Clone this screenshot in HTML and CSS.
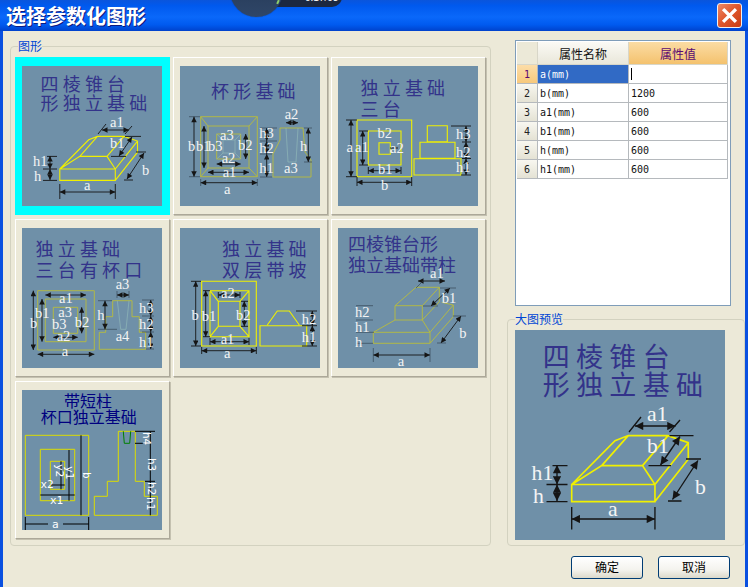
FILE: index.html
```html
<!DOCTYPE html>
<html lang="zh-CN">
<head>
<meta charset="utf-8">
<title>选择参数化图形</title>
<link rel="stylesheet" href="styles.css">
</head>
<body>
<div class="window">
  <header class="titlebar">
    <h1 class="title">选择参数化图形</h1>
    <div class="floater"><span class="floater-dial"></span><span class="floater-tick"></span><span class="floater-time">0:17/03</span></div>
    <button class="close" aria-label="关闭"><svg viewBox="0 0 24 24" class="close-x"><path d="M6.5 6.5L17.5 17.5M17.5 6.5L6.5 17.5"/></svg></button>
  </header>
  <main class="client">
    <div class="columns">
      <fieldset class="group group-shapes">
        <legend>图形</legend>
        <div class="shape-grid">
          <div class="cell cell-selected">
            <svg class="thumb" viewBox="0 0 140 140">
              <defs>
                <marker id="ah" viewBox="0 0 6 6" refX="6" refY="3" markerUnits="userSpaceOnUse" markerWidth="7" markerHeight="5.5" orient="auto-start-reverse"><path d="M0 0L6 3L0 6z" fill="#151515"/></marker>
              </defs>
              <g id="d1">
                <text class="ttl" x="18.5" y="24.5">四棱锥台</text>
                <text class="ttl" x="18.5" y="43.5">形独立基础</text>
                <path class="yb" d="M37.8 103H93.3V114.4H37.8zM37.8 103L66.7 73.8L75.5 70.4H102L115.5 75.1V86.2L93.3 114.4M93.3 103L115.5 75.1M37.8 103L57.8 90.4H85L93.3 103M57.8 90.4L75.5 70.4M85 90.4L102 70.4"/>
                <line class="dim" x1="37.8" y1="126" x2="93.3" y2="126"/>
                <line class="dim" x1="80" y1="64" x2="107" y2="64"/>
                <line class="dim" x1="110" y1="71" x2="97" y2="90"/>
                <line class="dim" x1="122" y1="87" x2="105" y2="113"/>
                <line class="dim" x1="28" y1="90" x2="28" y2="103"/>
                <line class="dim" x1="28" y1="103" x2="28" y2="114"/>
                <path class="tick" d="M37.8 118V133M93.3 118V133M76 68L84 58M103 68L110 60M103 70.4H119M89 90.4H104M102 114H111M114 86H124M25 90.4H35M21 103H35M21 114.4H35"/>
                <text class="lbl" x="62" y="124">a</text>
                <text class="lbl" x="88" y="60.5">a1</text>
                <text class="lbl" x="88" y="82">b1</text>
                <text class="lbl" x="120" y="109">b</text>
                <text class="lbl" x="11" y="100">h1</text>
                <text class="lbl" x="12" y="115">h</text>
              </g>
            </svg>
          </div>
          <div class="cell">
            <svg class="thumb" viewBox="0 0 140 140">
              <text class="ttl" x="31" y="32">杯形基础</text>
              <path class="yt" d="M20.7 50.7H77.3V110.7H20.7zM28 60H69V102H28zM36.7 68H60.7V93H36.7zM20.7 50.7L28 60M77.3 50.7L69 60M20.7 110.7L28 102M77.3 110.7L69 102M100 62H123L125 86L131 94V111H93V88L100 74z"/>
              <path class="pale" d="M43 74H55V87H43zM36.7 68L43 74M60.7 68L55 74M36.7 93L43 87M60.7 93L55 87M106 62L108 96H116L118 62"/>
              <line class="dim" x1="20.7" y1="116.7" x2="77.3" y2="116.7"/>
              <line class="dim" x1="28" y1="106.3" x2="69" y2="106.3"/>
              <line class="dim" x1="36.7" y1="98" x2="60.7" y2="98"/>
              <line class="dim" x1="14" y1="50.7" x2="14" y2="110.7"/>
              <line class="dim" x1="24" y1="60" x2="24" y2="102"/>
              <line class="dim" x1="65.7" y1="68" x2="65.7" y2="93"/>
              <line class="dim" x1="106" y1="56.7" x2="118" y2="56.7"/>
              <line class="dim" x1="86.7" y1="62" x2="86.7" y2="75"/>
              <line class="dim" x1="86.7" y1="75" x2="86.7" y2="88"/>
              <line class="dim" x1="86.7" y1="88" x2="86.7" y2="111"/>
              <line class="dim" x1="128.3" y1="62" x2="128.3" y2="96"/>
              <path class="tick thin" d="M9 50.7H20M9 110.7H20M20.7 113V120M77.3 113V120M80 62H97M80 75H97M80 88H92M80 111H92M124 62H132M124 96H132"/>
              <g class="lbl-sm">
                <text x="8" y="85">b</text><text x="16" y="85">b1</text><text x="28" y="85">b3</text>
                <text x="40" y="74">a3</text><text x="58" y="84">b2</text><text x="41.7" y="97">a2</text><text x="42.7" y="111">a1</text>
                <text x="44" y="128">a</text><text x="104.7" y="53.3">a2</text><text x="79.3" y="72.3">h3</text><text x="79.3" y="86.7">h2</text>
                <text x="79.3" y="106.7">h1</text><text x="120" y="84.7">h</text><text x="104" y="107.3">a3</text>
              </g>
            </svg>
          </div>
          <div class="cell">
            <svg class="thumb" viewBox="0 0 140 140">
              <text class="ttl" x="22.5" y="29">独立基础</text>
              <text class="ttl" x="22.5" y="50">三台</text>
              <path class="yb" d="M19 54H73.7V110.7H19zM30.3 65H63V99H30.3zM41 76.7H52.3V88.3H41zM89.3 59.7H109.3V75.7H89.3zM82 76.3H117V92.3H82zM76 92.7H123V109H76z"/>
              <line class="dim" x1="13" y1="54" x2="13" y2="110.7"/>
              <line class="dim" x1="24.7" y1="65" x2="24.7" y2="99"/>
              <line class="dim" x1="19" y1="116.3" x2="73.7" y2="116.3"/>
              <line class="dim" x1="30.3" y1="104.7" x2="63" y2="104.7"/>
              <line class="dim" x1="128" y1="60" x2="128" y2="76"/>
              <line class="dim" x1="128" y1="76" x2="128" y2="92.5"/>
              <line class="dim" x1="128" y1="92.5" x2="128" y2="109"/>
              <path class="tick" d="M8 54H19M8 110.7H19M21 65H30M21 99H30M19 111V120M73.7 111V120M30.3 101V108M63 101V108M113 60H133M124 76H133M124 92.5H133M123 109H133M52 82H60"/>
              <text class="lbl" x="8.5" y="86">a</text><text class="lbl" x="17" y="86">a1</text>
              <text class="lbl" x="39.5" y="72">b2</text><text class="lbl" x="52" y="87">a2</text>
              <text class="lbl" x="40" y="108">b1</text><text class="lbl" x="43" y="124">b</text>
              <text class="lbl" x="118" y="73">h3</text><text class="lbl" x="118" y="90.5">h2</text><text class="lbl" x="118" y="106">h1</text>
            </svg>
          </div>
          <div class="cell">
            <svg class="thumb" viewBox="0 0 140 140">
              <text class="ttl" x="13.5" y="27.7">独立基础</text>
              <text class="ttl" x="13.5" y="48.7">三台有杯口</text>
              <path class="yt" d="M15.7 62.7H72.3V122H15.7zM23.3 71H64V113.7H23.3zM31.3 79.3H55.7V105.3H31.3zM90.7 72.7H110V88.7H117.3V104.3H123.7V121.3H77.3V104.3H83.7V88.7H90.7z"/>
              <path class="pale" d="M95.3 72.7L98.7 101.3H104L107 72.7"/>
              <line class="dim" x1="11.3" y1="62.7" x2="11.3" y2="122"/>
              <line class="dim" x1="20" y1="71" x2="20" y2="113.7"/>
              <line class="dim" x1="23.3" y1="67" x2="64" y2="67"/>
              <line class="dim" x1="15.7" y1="126.3" x2="72.3" y2="126.3"/>
              <line class="dim" x1="59.7" y1="79.3" x2="59.7" y2="105.3"/>
              <line class="dim" x1="31.3" y1="109.3" x2="55.7" y2="109.3"/>
              <line class="dim" x1="95" y1="67" x2="107" y2="67"/>
              <line class="dim" x1="83" y1="72.7" x2="83" y2="101.3"/>
              <line class="dim" x1="128.7" y1="72" x2="128.7" y2="88"/>
              <line class="dim" x1="128.7" y1="88" x2="128.7" y2="104"/>
              <line class="dim" x1="128.7" y1="104" x2="128.7" y2="121"/>
              <path class="tick thin" d="M76 72.7H90M76 101.3H95M120 72H132M120 88H132M120 104H132M124 121H132M95 63V70M107 63V70"/>
              <g class="lbl-sm">
                <text x="37" y="75">a1</text><text x="13" y="90">b1</text><text x="8" y="100">b</text><text x="36.3" y="88.7">a3</text>
                <text x="30" y="101">b3</text><text x="52.7" y="98.7">b2</text><text x="34.7" y="112.7">a2</text><text x="39.7" y="127.7">a</text>
                <text x="93.7" y="61">a3</text><text x="75.3" y="92">h</text><text x="93.7" y="113">a4</text>
                <text x="117" y="85">h3</text><text x="117" y="101">h2</text><text x="117" y="118.7">h1</text>
              </g>
            </svg>
          </div>
          <div class="cell">
            <svg class="thumb" viewBox="0 0 140 140">
              <text class="ttl" x="42" y="27.7">独立基础</text>
              <text class="ttl" x="42" y="48.7">双层带坡</text>
              <path class="yb" d="M21.7 53.3H76.3V118H21.7zM80 97.7H126.7V118H80zM87.3 97L97.3 83H109.3L119.3 97M30 62.7H69V108.7H30zM38.3 73.3H60V98.3H38.3zM30 62.7L38.3 73.3M69 62.7L60 73.3M30 108.7L38.3 98.3M69 108.7L60 98.3"/>
              <line class="dim" x1="15.7" y1="53.3" x2="15.7" y2="118"/>
              <line class="dim" x1="25.7" y1="62.7" x2="25.7" y2="108.7"/>
              <line class="dim" x1="64.3" y1="73.3" x2="64.3" y2="98.3"/>
              <line class="dim" x1="38.3" y1="67" x2="60" y2="67"/>
              <line class="dim" x1="30" y1="113.7" x2="69" y2="113.7"/>
              <line class="dim" x1="21.7" y1="122.7" x2="76.3" y2="122.7"/>
              <line class="dim" x1="132.3" y1="83" x2="132.3" y2="97.7"/>
              <line class="dim" x1="132.3" y1="97.7" x2="132.3" y2="118"/>
              <path class="tick" d="M11 53.3H21M11 118H21M23 62.7H30M23 108.7H30M61 73.3H68M61 98.3H68M30 110V117M69 110V117M21.7 119V126M76.3 119V126M116 83H137M122 97.7H137M122 118H137M38.3 64V70M60 64V70"/>
              <text class="lbl" x="11.5" y="92">b</text><text class="lbl" x="21.7" y="93">b1</text><text class="lbl" x="41" y="70.3">a2</text>
              <text class="lbl" x="56" y="92">b2</text><text class="lbl" x="40.7" y="116.3">a1</text><text class="lbl" x="44" y="129.7">a</text>
              <text class="lbl" x="121.7" y="96.3">h2</text><text class="lbl" x="121.7" y="113.7">h1</text>
            </svg>
          </div>
          <div class="cell">
            <svg class="thumb" viewBox="0 0 140 140">
              <text class="ttl ttl-tight" x="10" y="23">四棱锥台形</text>
              <text class="ttl ttl-tight" x="10" y="43.7">独立基础带柱</text>
              <path class="yt" d="M35.3 104.3H92V115.3H35.3zM35.3 104.3L57 92H84.3V77.7H57V92M57 77.7L78 59.3H101.3V73.7L84.3 92M84.3 77.7L101.3 59.3M84.3 92L92 104.3M92 104.3L115.3 77V88.7L92 115.3M103.7 74.3L115.3 77"/>
              <line class="dim" x1="35.3" y1="127" x2="92" y2="127"/>
              <line class="dim" x1="80" y1="53" x2="107" y2="53"/>
              <line class="dim" x1="112" y1="60" x2="93" y2="78"/>
              <line class="dim" x1="123" y1="88" x2="103" y2="115"/>
              <path class="tick thin" d="M35.3 120V134M92 120V134M78 60L86 52M102 60H118M85 78H100M99 115H108M115 88H128M18 77.7H35M18 92H35M18 104.3H36M18 115.3H35"/>
              <text class="lbl" x="59.7" y="137.5">a</text><text class="lbl" x="92" y="50">a1</text><text class="lbl" x="103.7" y="75.3">b1</text>
              <text class="lbl" x="121.3" y="110.3">b</text><text class="lbl" x="17" y="88.7">h2</text><text class="lbl" x="17" y="104.3">h1</text><text class="lbl" x="17" y="118.7">h</text>
            </svg>
          </div>
          <div class="cell">
            <svg class="thumb" viewBox="0 0 140 140">
              <text class="ttl-navy" x="42" y="16.7">带短柱</text>
              <text class="ttl-navy" x="18.7" y="32.7">杯口独立基础</text>
              <path class="yp" d="M3.3 45.3H66.7V125.3H3.3zM18.3 59.3H52.7V110.7H18.3zM28.3 71.3H42.7V99.3H28.3zM96.3 41.3H113.3V91.3H122.3V106.3H135.3V125.3H72.3V106.3H85.3V91.3H96.3z"/>
              <path class="grn" d="M101.3 41.3L102.3 53.3H107.7L108.7 41.3"/>
              <path class="blk" d="M128.3 41.3V125.3M113 41.3H133M113 53.3H123M123 91.3H133M59 45.3V125.3M47 60V110.7M39 71.3V99.3M18.3 105H52.7M28.3 95H42.7M3.3 134H26M41 134H66.7M3.3 127V140M66.7 127V140"/>
              <text class="lbl-mono" x="28" y="114">x1</text><text class="lbl-mono" x="18.5" y="98">x2</text><text class="lbl-mono" x="30" y="138">a</text>
              <text class="lbl-mono" transform="translate(61 82) rotate(90)">b</text>
              <text class="lbl-mono" transform="translate(44 76) rotate(90)">y1</text>
              <text class="lbl-mono" transform="translate(34 74) rotate(90)">y2</text>
              <text class="lbl-mono" transform="translate(121 42) rotate(90)">h4</text>
              <text class="lbl-mono" transform="translate(126 68) rotate(90)">h3</text>
              <text class="lbl-mono" transform="translate(126 92) rotate(90)">h2</text>
              <text class="lbl-mono" transform="translate(125 107) rotate(90)">h1</text>
            </svg>
          </div>
        </div>
      </fieldset>
      <div class="side">
        <div class="props">
          <table class="prop-table">
            <colgroup><col class="col-idx"><col class="col-name"><col class="col-val"></colgroup>
            <thead>
              <tr><th class="corner"></th><th class="head">属性名称</th><th class="head head-on">属性值</th></tr>
            </thead>
            <tbody>
              <tr><th class="idx idx-on">1</th><td class="name name-on">a(mm)</td><td class="val"><span class="caret"></span></td></tr>
              <tr><th class="idx">2</th><td class="name">b(mm)</td><td class="val">1200</td></tr>
              <tr><th class="idx">3</th><td class="name">a1(mm)</td><td class="val">600</td></tr>
              <tr><th class="idx">4</th><td class="name">b1(mm)</td><td class="val">600</td></tr>
              <tr><th class="idx">5</th><td class="name">h(mm)</td><td class="val">600</td></tr>
              <tr><th class="idx">6</th><td class="name">h1(mm)</td><td class="val">600</td></tr>
            </tbody>
          </table>
        </div>
        <fieldset class="group group-preview">
          <legend>大图预览</legend>
          <svg class="preview" viewBox="0 0 140 140"><use href="#d1"/></svg>
        </fieldset>
      </div>
    </div>
    <footer class="actions">
      <button class="btn">确定</button>
      <button class="btn">取消</button>
    </footer>
  </main>
</div>
</body>
</html>
```
FILE: styles.css
```css
* { box-sizing: border-box; }
html, body { margin: 0; padding: 0; }
body {
  width: 748px;
  height: 587px;
  overflow: hidden;
  font-family: "Noto Sans CJK SC", "Liberation Sans", sans-serif;
  font-size: 12px;
  background: #ece9d8;
}
.window { width: 748px; height: 587px; display: flex; flex-direction: column; }

/* title bar */
.titlebar {
  position: relative;
  height: 31px;
  flex: none;
  overflow: hidden;
  display: flex;
  align-items: center;
  justify-content: space-between;
  padding: 0 6px;
  background: linear-gradient(180deg, #0a55dc 0%, #0059ee 18%, #0a68fa 55%, #005aef 80%, #0042cc 100%);
}
.title {
  margin: 0;
  font-size: 20px;
  font-weight: 700;
  line-height: 24px;
  color: #fff;
  text-shadow: 1px 1px 0 #0b1a80;
}
.floater { position: absolute; left: 230px; top: 0; width: 112px; height: 17px; }
.floater-dial {
  position: absolute; left: 0; top: -36px; width: 53px; height: 53px; border-radius: 50%;
  background: linear-gradient(180deg, #22354f, #2f4668);
  box-shadow: 0 0 1px #0b2a70;
}
.floater::before {
  content: "";
  position: absolute; left: 30px; top: -14px; width: 82px; height: 21px; border-radius: 0 10px 10px 0;
  background: #1c2840;
}
.floater-tick { position: absolute; left: 47px; top: 0; width: 2px; height: 4px; background: #8fd06a; transform: rotate(25deg); }
.floater-time { position: absolute; left: 75px; top: -8px; font: 10px/11px "Liberation Sans", sans-serif; color: #fff; }
.close {
  width: 25px; height: 25px; padding: 0;
  border: 1px solid #f4f0ee;
  border-radius: 3px;
  background: linear-gradient(135deg, #ee8a68 0%, #e0592f 45%, #c93c12 100%);
  display: flex;
}
.close-x { width: 23px; height: 23px; }
.close-x path { fill: none; stroke: #fff; stroke-width: 3.4; stroke-linecap: square; }

/* client */
.client {
  flex: 1;
  border-left: 3px solid #0a50e0;
  border-right: 3px solid #0a50e0;
  background: #ece9d8;
  padding: 8px 0 0 7px;
  display: flex;
  flex-direction: column;
}
.columns { display: flex; gap: 16px; }

.group {
  margin: 0;
  min-width: 0;
  border: 1px solid #d3d2c0;
  border-radius: 4px;
}
.group legend {
  padding: 0;
  font-size: 12px;
  line-height: 14px;
  color: #0046d5;
}
.group-shapes { width: 481px; height: 507px; padding: 4px 4px 0; }
.group-shapes legend { margin-left: 3px; }
.shape-grid { display: grid; grid-template-columns: repeat(3, 155px); grid-auto-rows: 158px; column-gap: 3px; row-gap: 4px; }
.cell {
  background: #ece9d8;
  border: 1px solid;
  border-color: #fff #aca899 #aca899 #fff;
  box-shadow: 1px 1px 0 #c4c1b0;
  padding: 8px 0 0 6px;
}
.cell-selected { background: #00ffff; border-color: #00ffff; box-shadow: none; }
.thumb { display: block; width: 140px; height: 140px; background: #6f90a8; }

/* svg drawing */
.ttl { font-size: 18px; letter-spacing: 4.2px; fill: #33338a; font-weight: 400; }
.ttl.ttl-tight { letter-spacing: 0; }
.ttl-navy { font-size: 16px; fill: #000080; }
.lbl, .lbl-sm text { font-family: "Liberation Serif", serif; font-size: 14.5px; fill: #f4f4f4; }
.lbl-mono { font-family: "DejaVu Sans Mono", monospace; font-size: 11px; fill: #fff; }
.yb, .yt, .pale, .yp, .grn, .blk, .tick { fill: none; }
.yb { stroke: #f0f000; stroke-width: 1.1; }
.yt { stroke: #b9bc3c; stroke-width: .9; }
.pale { stroke: #8fb8b8; stroke-width: .7; }
.yp { stroke: #dcdc00; stroke-width: 1; }
.grn { stroke: #008000; stroke-width: 1; }
.blk { stroke: #000; stroke-width: 1; }
.dim { stroke: #151515; stroke-width: .9; marker-start: url(#ah); marker-end: url(#ah); }
.tick { stroke: #151515; stroke-width: .9; }
.tick.thin { stroke: #2b3a48; stroke-width: .6; }

/* right column */
.side { display: flex; flex-direction: column; width: 238px; }
.props {
  margin: 1px 0 6px 8px;
  width: 216px;
  height: 266px;
  border: 1px solid #7f9db9;
  background: #fff;
  padding: 1px 0 0 1px;
}
.prop-table { border-collapse: separate; border-spacing: 0; table-layout: fixed; width: 211px; }
.col-idx { width: 21px; }
.col-name { width: 91px; }
.col-val { width: 99px; }
.prop-table th, .prop-table td {
  padding: 0;
  height: 19px;
  font-weight: 400;
  border-right: 1px solid #b5b9bd;
  border-bottom: 1px solid #b5b9bd;
  line-height: 17px;
}
.prop-table thead th { height: 23px; border-color: #d8d6c8; color: #111; font-size: 12px; }
.corner { background: #ece9d8; }
.head { background: linear-gradient(180deg, #fbfaf5, #e9e7da); }
.prop-table .head-on { background: linear-gradient(180deg, #fbdca4, #f4c26e); color: #5a0a72; }
.idx { background: linear-gradient(180deg, #f8f7f0, #e4e2d4); font-family: "DejaVu Sans Mono", monospace; font-size: 10px; text-align: center; color: #222; }
.idx-on { background: linear-gradient(180deg, #fcdda8, #f8c97c); color: #5a0a72; }
.name, .val { font-family: "DejaVu Sans Mono", monospace; font-size: 10px; color: #111; padding-left: 2px !important; }
.val { background: #fff; }
.name-on { background: #316ac5; color: #fff; }
.caret { display: block; width: 1px; height: 12px; background: #000; }

.group-preview { height: 234px; padding: 4px 0 0 7px; }
.preview { display: block; width: 210px; height: 210px; background: #6f90a8; }

/* footer */
.actions { display: flex; justify-content: flex-end; gap: 15px; margin-top: 10px; padding-right: 15px; }
.btn {
  width: 72px; height: 23px; padding: 0 0 2px;
  font: 12px/17px "Noto Sans CJK SC", sans-serif;
  color: #000;
  border: 1px solid #003c74;
  border-radius: 3px;
  background: linear-gradient(180deg, #ffffff 0%, #f4f3ee 60%, #dcd9ca 100%);
}
```
